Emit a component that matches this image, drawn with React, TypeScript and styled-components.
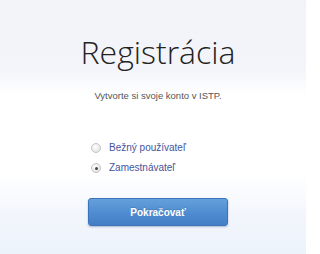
import React, { useState } from 'react';
import styled, { createGlobalStyle } from 'styled-components';

const GlobalStyle = createGlobalStyle`
  html, body {
    margin: 0;
    padding: 0;
  }
  body {
    width: 306px;
    height: 254px;
    overflow: hidden;
    font-family: 'Liberation Sans', Arial, sans-serif;
  }
`;

const Page = styled.div`
  width: 306px;
  height: 254px;
  box-sizing: border-box;
  padding-left: 10px;
  display: flex;
  flex-direction: column;
  align-items: center;
  background: linear-gradient(
    to bottom,
    #f2f3f9 0px,
    #f4f5fa 70px,
    #ffffff 95px,
    #ffffff 175px,
    #f2f6fc 215px,
    #edf3fb 254px
  );
`;

const Title = styled.h1`
  margin: 32px 0 0;
  font-family: 'Open Sans', sans-serif;
  font-weight: 300;
  font-size: 32px;
  line-height: 40px;
  color: #222;
`;

const Subtitle = styled.p`
  margin: 18px 0 0;
  font-size: 9.5px;
  line-height: 12px;
  color: #555;
`;

const Options = styled.div`
  align-self: stretch;
  display: flex;
  flex-direction: column;
  gap: 8px;
  margin: 40px 0 0 81px;
`;

const Option = styled.label`
  display: flex;
  align-items: center;
  gap: 8px;
  font-size: 10px;
  line-height: 12px;
  color: #46549a;
  cursor: pointer;
`;

const RadioDot = styled.span<{ $checked: boolean }>`
  position: relative;
  width: 8px;
  height: 8px;
  border-radius: 50%;
  border: 1px solid #c4c4c4;
  background: radial-gradient(circle at 40% 35%, #ffffff, #dcdcdc);
  box-sizing: content-box;

  &::after {
    content: '';
    display: ${p => (p.$checked ? 'block' : 'none')};
    position: absolute;
    left: 2.5px;
    top: 2.5px;
    width: 3px;
    height: 3px;
    border-radius: 50%;
    background: #444;
  }
`;

const Button = styled.button`
  margin-top: 24px;
  width: 140px;
  height: 28px;
  border: 1px solid #3d74b8;
  border-radius: 3px;
  background: linear-gradient(to bottom, #65a0dc 0%, #4e8bd0 55%, #437fc6 100%);
  box-shadow: 0 1px 2px rgba(40, 70, 120, 0.35);
  color: #fff;
  font-family: 'Liberation Sans', Arial, sans-serif;
  font-weight: bold;
  font-size: 10px;
  text-shadow: 0 -1px 0 rgba(0, 0, 0, 0.15);
  cursor: pointer;
`;

const options = ['Bežný používateľ', 'Zamestnávateľ'];

const App = () => {
  const [selected, setSelected] = useState(1);

  return (
    <Page>
      <GlobalStyle />
      <Title>Registrácia</Title>
      <Subtitle>Vytvorte si svoje konto v ISTP.</Subtitle>
      <Options>
        {options.map((label, i) => (
          <Option key={label} onClick={() => setSelected(i)}>
            <RadioDot $checked={selected === i} />
            {label}
          </Option>
        ))}
      </Options>
      <Button>Pokračovať</Button>
    </Page>
  );
};

export default App;
